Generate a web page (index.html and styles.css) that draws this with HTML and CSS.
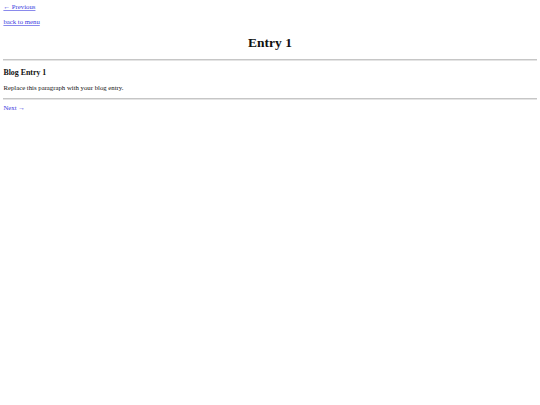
FILE: index.html
```html
<!DOCTYPE html>
<html lang="en">
<head>
    <meta charset="UTF-8">
    <title>Entry 1</title>
    <link rel="stylesheet" href="styles.css">
</head>
<body>
    <a href="#">&larr; Previous</a>
    <p><a href="#">back to menu</a></p>

    <h1 class="entry-title">Entry 1</h1>
    <hr>

    <!-- Blog post body -->
    <h3 class="post-title">Blog Entry 1</h3>
    <p>Replace this paragraph with your blog entry.</p>
    <hr>

    <a href="#">Next &rarr;</a>
</body>
</html>
```

FILE: styles.css
```css
body {
    font-family: "Liberation Serif", "Times New Roman", serif;
    font-size: 6.75px;
    line-height: 1.15;
    margin: 3.4px;
    color: #111;
    background-color: #fff;
}

a {
    color: #3a3ae0;
    text-decoration-thickness: 1px;
    text-decoration-color: #8a8aec;
    text-underline-offset: 1px;
}

.entry-title {
    text-align: center;
    font-size: 13.5px;
}

.post-title {
    margin: 0.85em 0;
}

hr {
    height: 0;
    border: none;
    border-top: 1px solid #c6c6c6;
    border-bottom: 0.7px solid #e4e4e4;
    margin: 3.4px 0;
}
```
